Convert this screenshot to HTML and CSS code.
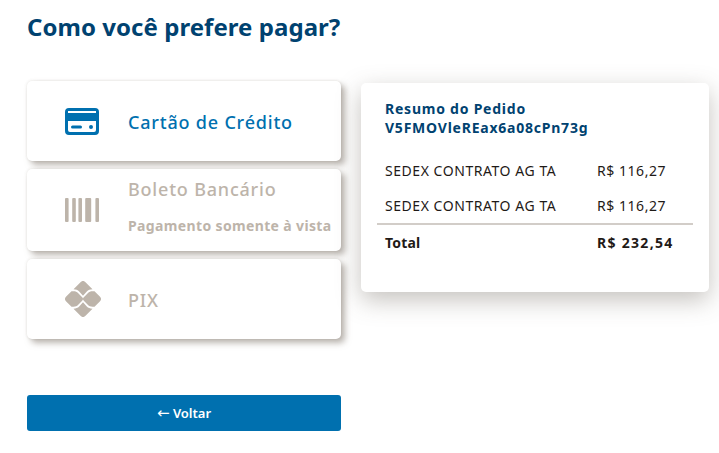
FILE: index.html
```html
<!DOCTYPE html>
<html lang="pt-BR">
<head>
    <meta charset="UTF-8">
    <meta name="viewport" content="width=device-width, initial-scale=1.0">
    <title>Pagamento</title>
    <link rel="stylesheet" href="styles.css">
</head>
<body>
    <h1 class="page-title">Como você prefere pagar?</h1>

    <div class="checkout">
        <!-- formas de pagamento -->
        <div class="methods">
            <a class="method method-active">
                <span class="method-icon">
                    <svg width="34" height="27" viewBox="0 0 34 27">
                        <path fill="#0070af" fill-rule="evenodd" d="M4 0h26a4 4 0 0 1 4 4v19a4 4 0 0 1-4 4H4a4 4 0 0 1-4-4V4a4 4 0 0 1 4-4zM3 3v2h28V3zM3 13v9a2 2 0 0 0 2 2h24a2 2 0 0 0 2-2V13zM7.500 17.500h8a1.500 1.500 0 0 1 0 3h-8a1.500 1.500 0 0 1 0-3zM26 17a2 2 0 1 1 0 4a2 2 0 0 1 0-4z"/>
                    </svg>
                </span>
                <span class="method-text">
                    <span class="method-name">Cartão de Crédito</span>
                </span>
            </a>
            <a class="method method-boleto">
                <span class="method-icon">
                    <svg width="34" height="24" viewBox="0 0 34 24" fill="#bdb4aa">
                        <rect x="0" y="0" width="3.600" height="24" rx="1"/>
                        <rect x="7.200" y="0" width="3.600" height="24" rx="1"/>
                        <rect x="13.400" y="0" width="3.600" height="24" rx="1"/>
                        <rect x="20.200" y="0" width="6" height="24" rx="1"/>
                        <rect x="30.400" y="0" width="3.600" height="24" rx="1"/>
                    </svg>
                </span>
                <span class="method-text method-text-up">
                    <span class="method-name">Boleto Bancário</span>
                    <span class="method-note">Pagamento somente à vista</span>
                </span>
            </a>
            <a class="method">
                <span class="method-icon">
                    <svg width="36" height="36" viewBox="0 0 36 36" fill="#bdb4aa">
                        <path d="M15.500 1.200a3.500 3.500 0 0 1 5 0L27.500 8.300c-2.500 0-4.300.7-5.700 2.100L18 14.700l-3.800-4.300c-1.400-1.400-3.200-2.100-5.700-2.100z"/>
                        <path d="M15.500 34.800a3.500 3.500 0 0 0 5 0L27.500 27.700c-2.500 0-4.300-.7-5.700-2.100L18 21.300l-3.800 4.300c-1.400 1.400-3.200 2.100-5.700 2.100z"/>
                        <path d="M6.500 10.300h2c2 0 3.500.5 4.500 1.600L17.200 16.300a2.400 2.400 0 0 1 0 3.400L13 24.100c-1 1.100-2.500 1.600-4.500 1.600h-2L1.200 20.500a3.500 3.500 0 0 1 0-5z"/>
                        <path d="M29.500 10.300h-2c-2 0-3.500.5-4.500 1.600L18.800 16.300a2.400 2.400 0 0 0 0 3.400L23 24.100c1 1.100 2.500 1.600 4.500 1.600h2l5.300-5.200a3.500 3.500 0 0 0 0-5z"/>
                    </svg>
                </span>
                <span class="method-text">
                    <span class="method-name">PIX</span>
                </span>
            </a>
        </div>

        <!-- resumo -->
        <div class="summary">
            <h2 class="summary-title">Resumo do Pedido<br>V5FMOVleREax6a08cPn73g</h2>
            <div class="summary-row">
                <span class="summary-label">SEDEX CONTRATO AG TA</span>
                <span class="summary-price">R$ 116,27</span>
            </div>
            <div class="summary-row">
                <span class="summary-label">SEDEX CONTRATO AG TA</span>
                <span class="summary-price">R$ 116,27</span>
            </div>
            <div class="summary-row summary-total">
                <span class="summary-label">Total</span>
                <span class="summary-price">R$ 232,54</span>
            </div>
        </div>
    </div>

    <button class="back-button"><span class="back-arrow">←</span> Voltar</button>
</body>
</html>
```

FILE: styles.css
```css
/* geral */
body {
    font-family: 'Noto Sans', 'DejaVu Sans', sans-serif;
    background-color: #fff;
    color: #1f1a17;
    margin: 0;
    padding: 0 10px 0 27px;
    overflow: hidden;
}

.page-title {
    font-size: 24px;
    line-height: 30px;
    font-weight: 700;
    color: #004270;
    margin: 0;
    padding-top: 12px;
    letter-spacing: 0.05px;
}

.checkout {
    display: flex;
    align-items: flex-start;
    gap: 20px;
    margin-top: 39px;
}

/* formas de pagamento */
.methods {
    width: 314px;
    display: flex;
    flex-direction: column;
    gap: 8px;
}

.method {
    display: flex;
    align-items: center;
    height: 80px;
    background: #fff;
    border-radius: 5px;
    box-shadow: 4px 4px 6px rgba(130, 120, 110, 0.55), 0 0 3px rgba(130, 120, 110, 0.2);
    color: #bdb4aa;
}

.method-boleto {
    height: 82px;
}

.method-active {
    color: #0070af;
}

.method-icon {
    width: 101px;
    padding-left: 38px;
    box-sizing: border-box;
    display: flex;
    flex-shrink: 0;
}

.method-text {
    display: flex;
    flex-direction: column;
    padding-top: 2px;
}

.method-text-up {
    padding-top: 0;
    margin-top: -8px;
}

.method-name {
    font-size: 18px;
    line-height: 24px;
    font-weight: 500;
    letter-spacing: 0.8px;
}

.method-note {
    font-size: 14px;
    line-height: 20px;
    font-weight: 700;
    margin-top: 15px;
    letter-spacing: 0.36px;
    white-space: nowrap;
}

/* resumo */
.summary {
    width: 348px;
    height: 209px;
    margin-top: 2px;
    box-sizing: border-box;
    padding: 16px 16px 0;
    background: #fff;
    border-radius: 5px;
    box-shadow: 0 8px 24px rgba(90, 80, 70, 0.35);
    font-size: 14px;
}

.summary-title {
    font-size: 14px;
    line-height: 19px;
    font-weight: 700;
    color: #004270;
    margin: 0 8px 16px;
    letter-spacing: 0.77px;
}

.summary-row {
    display: flex;
    height: 35px;
    align-items: center;
    padding: 0 8px;
    letter-spacing: 0.55px;
}

.summary-label {
    width: 212px;
}

.summary-total {
    border-top: 2px solid #d2cdc8;
    font-weight: 700;
}

.summary-total .summary-label {
    letter-spacing: 0.2px;
}

.summary-total .summary-price {
    letter-spacing: 1.3px;
}

.back-button {
    display: block;
    width: 314px;
    height: 36px;
    margin-top: 56px;
    background-color: #0070af;
    color: #fff;
    border: none;
    border-radius: 3px;
    font-family: inherit;
    font-size: 13px;
    font-weight: 600;
}

.back-arrow {
    font-family: 'DejaVu Sans', sans-serif;
    font-weight: 400;
    font-size: 15px;
}
```
